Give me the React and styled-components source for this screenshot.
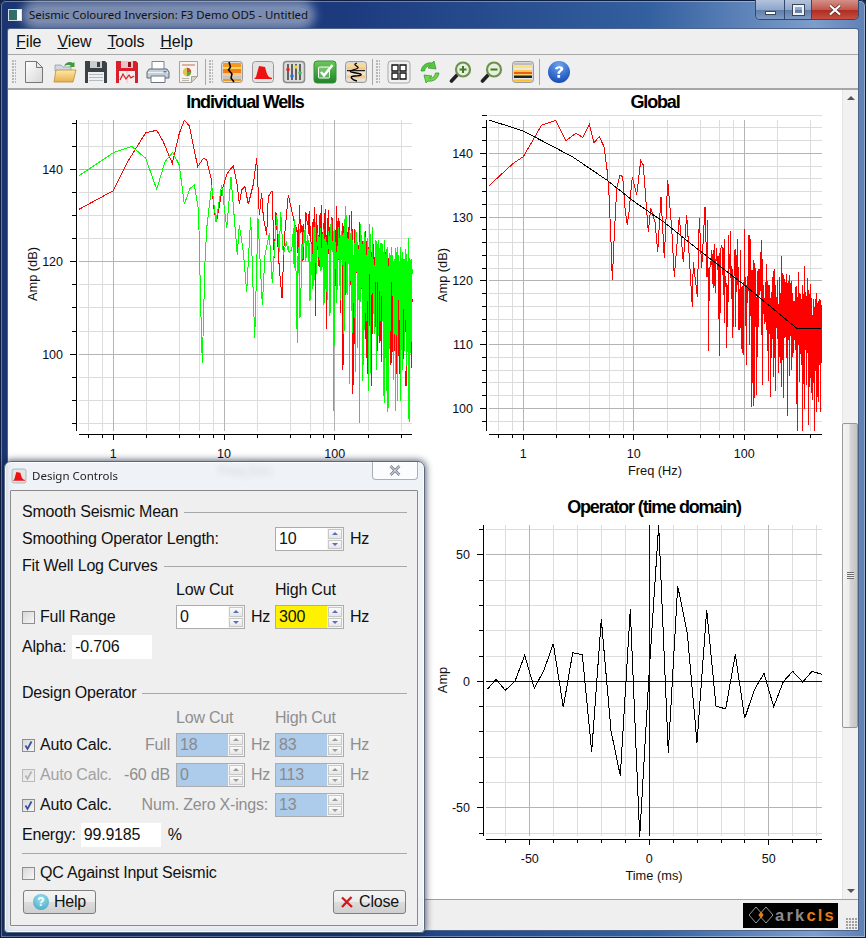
import React from 'react';
import styled, { createGlobalStyle } from 'styled-components';

const GlobalStyle = createGlobalStyle`
  html, body { margin: 0; padding: 0; background: #10244f; }
  * { box-sizing: border-box; }
`;

// ---------- chart helpers ----------

function mulberry(seed) {
  let a = seed;
  return () => {
    a |= 0; a = (a + 0x6d2b79f5) | 0;
    let t = Math.imul(a ^ (a >>> 15), 1 | a);
    t = (t + Math.imul(t ^ (t >>> 7), 61 | t)) ^ t;
    return ((t ^ (t >>> 14)) >>> 0) / 4294967296;
  };
}

function interpLog(knots, f) {
  const lf = Math.log10(f);
  for (let i = 0; i < knots.length - 1; i++) {
    const [f0, v0] = knots[i];
    const [f1, v1] = knots[i + 1];
    if (f <= f1) {
      const t = (lf - Math.log10(f0)) / (Math.log10(f1) - Math.log10(f0));
      return v0 + t * (v1 - v0);
    }
  }
  return knots[knots.length - 1][1];
}

// spectrum noise above f0, in page pixels. deep stretches the downward spikes
function noisySpectrum({ seed, f0, fMax = 500, knots, scale, deep = 1, xAt, yAt, minDb, maxDb }) {
  const rand = mulberry(seed);
  const pts = [];
  for (let f = f0; f <= fMax; f += 0.7) {
    const r = Math.sqrt(-2 * Math.log(Math.max(rand(), 0.0001)));
    const db = Math.max(-26, 20 * Math.log10(Math.max(r, 0.01)));
    const offset = db * scale * (db < 0 ? deep : 1);
    const v = Math.min(maxDb, Math.max(minDb, interpLog(knots, f) + offset));
    pts.push([xAt(f), yAt(v)]);
  }
  return pts;
}

const toStr = (pts) => pts.map(([x, y]) => `${x.toFixed(1)},${y.toFixed(1)}`).join(' ');
const fromZoom = (pts, ox, oy) => pts.map(([x, y]) => [ox + x / 3, oy + y / 3]);

const GRID_MAJOR = '#b4b4b4';
const GRID_MINOR = '#dcdcdc';

function Frame({ left, right, top, bottom, axisX, axisY, xMajor, xMinor, yMajor, yMinor, yTickLabelX, xLabelY, xTickMajor = 6, xTickMinor = 4 }) {
  return (
    <g shapeRendering="crispEdges">
      {yMinor.map((y) => <line key={`ym${y}`} x1={left} x2={right} y1={y} y2={y} stroke={GRID_MINOR} />)}
      {xMinor.map((x) => <line key={`xm${x}`} x1={x} x2={x} y1={top} y2={bottom} stroke={GRID_MINOR} />)}
      {yMajor.map((t) => <line key={`yM${t.y}`} x1={left} x2={right} y1={t.y} y2={t.y} stroke={GRID_MAJOR} />)}
      {xMajor.map((t) => <line key={`xM${t.x}`} x1={t.x} x2={t.x} y1={top} y2={bottom} stroke={GRID_MAJOR} />)}
      <line x1={axisX} x2={axisX} y1={top} y2={bottom} stroke="#000" />
      <line x1={left} x2={right} y1={axisY} y2={axisY} stroke="#000" />
      {yMinor.map((y) => <line key={`ytm${y}`} x1={axisX - 5} x2={axisX} y1={y} y2={y} stroke="#000" />)}
      {yMajor.map((t) => <line key={`ytM${t.y}`} x1={axisX - 7} x2={axisX} y1={t.y} y2={t.y} stroke="#000" />)}
      {xMinor.map((x) => <line key={`xtm${x}`} x1={x} x2={x} y1={axisY} y2={axisY + xTickMinor} stroke="#000" />)}
      {xMajor.map((t) => <line key={`xtM${t.x}`} x1={t.x} x2={t.x} y1={axisY} y2={axisY + xTickMajor} stroke="#000" />)}
      <g shapeRendering="auto">
        {yMajor.map((t) => <TickText key={`yl${t.y}`} x={yTickLabelX} y={t.y + 4.5} textAnchor="end">{t.label}</TickText>)}
        {xMajor.map((t) => <TickText key={`xl${t.x}`} x={t.x} y={xLabelY} textAnchor="middle">{t.label}</TickText>)}
      </g>
    </g>
  );
}

const TickText = styled.text`
  font: 12.5px "Liberation Sans", Arial, sans-serif;
  fill: #0c0c20;
`;

const AxisTitle = styled.text`
  font: 12.8px "Liberation Sans", Arial, sans-serif;
  fill: #111;
`;

const PlotTitle = styled.text`
  font: bold 18px "Liberation Sans", Arial, sans-serif;
  letter-spacing: -1.15px;
  fill: #000;
`;

function logGrid(x1, dec, left, right) {
  const xAt = (f) => x1 + dec * Math.log10(f);
  const minors = [0.6, 0.8, 2, 4, 6, 8, 20, 40, 60, 80, 200, 400].map(xAt).filter((x) => x >= left && x <= right);
  const majors = [1, 10, 100].map((f) => ({ x: xAt(f), label: String(f) }));
  return { xAt, minors, majors };
}

function range(from, to, step) {
  const out = [];
  for (let v = from; v <= to + 1e-6; v += step) out.push(v);
  return out;
}

// ---------- the three plots ----------

function WellsChart() {
  const { xAt, minors, majors } = logGrid(113.3, 110.7, 79, 412);
  const yAt = (v) => 169.3 + (140 - v) * 4.62;
  const yMinor = range(85, 150, 5).filter((v) => v % 20 !== 0).map(yAt);
  const yMajor = [140, 120, 100].map((v) => ({ y: yAt(v), label: String(v) }));

  const redLow = fromZoom([[147,343],[250,287],[290,205],[347,113],[380,106],[400,140],[427,205],[448,115],[463,76],[478,92],[503,215],[520,190],[530,195],[543,250],[553,350],[560,378],[575,290],[590,238],[610,212],[622,270],[628,328],[635,285],[645,275],[655,328],[670,268],[680,190],[688,360],[695,295],[700,365],[710,420],[715,305],[726,287],[733,490],[738,352],[748,520],[756,610],[763,430],[775,300]], 30, 95);
  const greenLow = fromZoom([[147,242],[250,173],[305,154],[347,190],[380,283],[405,200],[428,172],[448,210],[463,328],[480,280],[493,270],[505,340],[507,405],[512,630],[517,805],[525,500],[530,400],[545,270],[558,380],[575,270],[590,400],[603,247],[622,480],[628,390],[640,470],[650,590],[662,365],[674,730],[684,370],[697,630],[705,480],[718,415],[727,565],[740,360],[748,470],[752,350],[760,480]], 30, 95);
  const redHigh = noisySpectrum({ seed: 11, f0: 44, knots: [[40, 127], [100, 124], [160, 120], [400, 110]], scale: 0.85, deep: 1.5, xAt, yAt, minDb: 86, maxDb: 150 });
  const greenHigh = noisySpectrum({ seed: 29, f0: 36, knots: [[36, 119], [100, 122], [160, 120], [400, 114]], scale: 0.95, deep: 1.6, xAt, yAt, minDb: 85, maxDb: 150 });

  return (
    <Plot viewBox="8 90 422 400">
      <PlotTitle x={245} y={108} textAnchor="middle">Individual Wells</PlotTitle>
      <Frame left={79} right={412} top={120} bottom={431} axisX={76.5} axisY={434} xMajor={majors} xMinor={minors} yMajor={yMajor} yMinor={yMinor} yTickLabelX={63} xLabelY={458} />
      <AxisTitle transform="translate(37 274) rotate(-90)" textAnchor="middle">Amp (dB)</AxisTitle>
      <AxisTitle x={245} y={475} textAnchor="middle">Freq (Hz)</AxisTitle>
      <g fill="none" strokeWidth="1" shapeRendering="crispEdges">
        <polyline stroke="#f00" points={toStr([...redLow, ...redHigh])} />
        <polyline stroke="#0f0" points={toStr([...greenLow, ...greenHigh])} />
      </g>
    </Plot>
  );
}

function GlobalChart() {
  const { xAt, minors, majors } = logGrid(523.3, 110.5, 489, 822);
  const yAt = (v) => 153.3 + (140 - v) * 6.375;
  const yMinor = range(98, 146, 2).filter((v) => v % 10 !== 0).map(yAt);
  const yMajor = [140, 130, 120, 110, 100].map((v) => ({ y: yAt(v), label: String(v) }));

  const redLow = fromZoom([[177,272],[250,205],[280,185],[335,90],[377,76],[408,137],[437,115],[458,127],[478,88],[492,143],[508,125],[522,155],[532,230],[537,300],[543,440],[547,555],[553,420],[560,280],[570,240],[578,245],[585,340],[592,390],[597,350],[607,245],[620,300],[632,197],[640,210],[648,320],[655,410],[662,340],[675,380],[683,470],[693,305],[703,490],[713,255],[725,400],[733,545],[748,365],[760,500],[770,360],[787,635],[790,500],[802,605],[808,370],[815,520],[825,335],[831,545]], 430, 95);
  const redHigh = noisySpectrum({ seed: 7, f0: 46, knots: [[46, 121], [100, 119], [270, 113], [500, 110]], scale: 0.9, xAt, yAt, minDb: 96.5, maxDb: 146 });
  const black = fromZoom([[177,75],[280,108],[370,155],[430,187],[530,255],[613,320],[700,380],[800,460],[943,570],[1100,700],[1172,700]], 430, 95);

  return (
    <Plot viewBox="430 90 412 400">
      <PlotTitle x={655} y={108} textAnchor="middle">Global</PlotTitle>
      <Frame left={489} right={822} top={120} bottom={431} axisX={486.5} axisY={434} xMajor={majors} xMinor={minors} yMajor={yMajor} yMinor={yMinor} yTickLabelX={473} xLabelY={458} />
      <AxisTitle transform="translate(447 275) rotate(-90)" textAnchor="middle">Amp (dB)</AxisTitle>
      <AxisTitle x={655} y={475} textAnchor="middle">Freq (Hz)</AxisTitle>
      <g fill="none" strokeWidth="1" shapeRendering="crispEdges">
        <polyline stroke="#f00" points={toStr([...redLow, ...redHigh])} />
        <polyline stroke="#000" points={toStr(black)} />
      </g>
    </Plot>
  );
}

function OperatorChart() {
  const xAt = (t) => 649.3 + t * 2.39;
  const yAt = (v) => 681.3 - v * 2.53;
  const xMinor = [-60, -40, -30, -20, -10, 10, 20, 30, 40, 60, 70].map(xAt);
  const xMajor = [-50, 0, 50].map((t) => ({ x: xAt(t), label: String(t) }));
  const yMinor = [60, 40, 30, 20, 10, -10, -20, -30, -40, -60].map(yAt);
  const yMajor = [50, 0, -50].map((v) => ({ y: yAt(v), label: String(v) }));
  const trace = fromZoom([[172,598],[198,568],[226,601],[255,574],[284,496],[313,595],[342,540],[370,461],[400,652],[428,488],[457,494],[485,785],[514,388],[543,722],[571,857],[601,358],[629,1040],[658,540],[686,105],[715,788],[743,288],[772,430],[801,758],[830,360],[858,648],[887,657],[916,493],[944,685],[973,600],[1002,550],[1031,650],[1060,575],[1088,544],[1118,576],[1146,544],[1175,553]], 430, 490);

  return (
    <Plot viewBox="430 490 412 409">
      <PlotTitle x={654} y={513} textAnchor="middle">Operator (time domain)</PlotTitle>
      <Frame left={486} right={822} top={525} bottom={836} axisX={483.5} axisY={839} xMajor={xMajor} xMinor={xMinor} yMajor={yMajor} yMinor={yMinor} yTickLabelX={470} xLabelY={863} />
      <AxisTitle transform="translate(447 680) rotate(-90)" textAnchor="middle">Amp</AxisTitle>
      <AxisTitle x={654} y={880} textAnchor="middle">Time (ms)</AxisTitle>
      <g fill="none" shapeRendering="crispEdges">
        <line x1={xAt(0)} x2={xAt(0)} y1={525} y2={836} stroke="#000080" />
        <line x1={486} x2={822} y1={yAt(0)} y2={yAt(0)} stroke="#000080" />
        <polyline stroke="#000" points={toStr(trace)} />
      </g>
    </Plot>
  );
}

// ---------- toolbar icons ----------

const Strata = ({ bands }) => (
  <>
    <rect x="1.5" y="1.5" width="21" height="21" rx="3" fill="#d8d8d8" stroke="#9a9a9a" />
    {bands.map(([y, h, c]) => <rect key={y} x="3" y={y} width="18" height={h} fill={c} />)}
  </>
);

const CurveShape = () => (
  <>
    <rect x="1.5" y="1.5" width="21" height="21" rx="3" fill="#e4e4e4" stroke="#9a9a9a" />
    <path d="M3 19l2-2L8 6l6 1 2 7 2 3 3 1v1z" fill="#ee1111" />
  </>
);

const icons = {
  doc: (
    <svg width="24" height="24" viewBox="0 0 24 24">
      <defs><linearGradient id="gDoc" x1="0" y1="0" x2="1" y2="1"><stop offset="0" stopColor="#fff" /><stop offset="1" stopColor="#d6d6d6" /></linearGradient></defs>
      <path d="M3.5 1.5h11l6 6v15h-17z" fill="url(#gDoc)" stroke="#777" />
      <path d="M14.5 1.5v6h6z" fill="#e8e8e8" stroke="#777" />
    </svg>
  ),
  open: (
    <svg width="24" height="24" viewBox="0 0 24 24">
      <defs><linearGradient id="gFold" x1="0" y1="0" x2="0" y2="1"><stop offset="0" stopColor="#fde9a8" /><stop offset="1" stopColor="#e9b04e" /></linearGradient></defs>
      <path d="M2 5h6l2 2h8v4H2z" fill="#cfd8e4" stroke="#8a94a2" strokeWidth=".7" />
      <path d="M1 22 3 10h20l-3 12z" fill="url(#gFold)" stroke="#b98b3a" strokeWidth=".8" />
      <path d="M11 6c2-4 6-5 9-3l1.5-1v5h-5l1.5-1.2c-2-1.2-4.5-.8-7 .2z" fill="#3f9a3a" />
    </svg>
  ),
  save: (
    <svg width="24" height="24" viewBox="0 0 24 24">
      <path d="M1 1h20l2 2v20H1z" fill="#3c4146" />
      <rect x="6" y="1" width="12" height="7" fill="#c9ced3" />
      <rect x="13" y="2" width="3" height="5" fill="#3c4146" />
      <rect x="4" y="12" width="16" height="11" fill="#eef0f2" />
      <path d="M5 14.5h14M5 17.5h14M5 20.5h14" stroke="#b5bac0" />
    </svg>
  ),
  saveRed: (
    <svg width="24" height="24" viewBox="0 0 24 24">
      <path d="M1 1h20l2 2v20H1z" fill="#d9202a" />
      <rect x="6" y="1" width="12" height="7" fill="#e9c3c5" />
      <rect x="13" y="2" width="3" height="5" fill="#8e1218" />
      <rect x="4" y="11" width="16" height="12" fill="#f6eeee" />
      <path d="M4 17h16M12 11v12" stroke="#bbb" strokeWidth=".6" />
      <path d="M5 20l3-6 3 5 3-4 2 3 3-2" fill="none" stroke="#d9202a" strokeWidth="1.2" />
    </svg>
  ),
  print: (
    <svg width="24" height="24" viewBox="0 0 24 24">
      <path d="M6 1.5h12v8H6z" fill="#fff" stroke="#7b8490" />
      <path d="M3 9h18l2 3v6H1v-6z" fill="#c6ced8" stroke="#5f6974" />
      <path d="M2 12.5h20" stroke="#eef2f6" />
      <path d="M5 16h14v6.5H5z" fill="#fff" stroke="#6d7680" />
      <rect x="17.5" y="11" width="3" height="1.5" fill="#3a7fd0" />
    </svg>
  ),
  report: (
    <svg width="24" height="24" viewBox="0 0 24 24">
      <path d="M2.5 1.5h18v15l-6 6h-12z" fill="#f5f3ef" stroke="#a7a39b" />
      <path d="M14.5 22.5v-6h6z" fill="#d8d4cc" stroke="#a7a39b" />
      <path d="M5 4h13v2H5z" fill="#d9b3a0" />
      <circle cx="10" cy="12" r="4.2" fill="#e3c34a" />
      <path d="M10 12V7.8a4.2 4.2 0 0 1 4.2 4.2z" fill="#cf4b3a" />
      <path d="M10 12h4.2a4.2 4.2 0 0 1-4.2 4.2z" fill="#5aa84a" />
      <path d="M5 18.5h7M5 20.5h7" stroke="#b9b5ad" />
    </svg>
  ),
  fault: (
    <svg width="24" height="24" viewBox="0 0 24 24">
      <Strata bands={[[3, 4, '#f39a1e'], [7, 2, '#fcd55a'], [9, 4, '#f57c14'], [13, 3, '#f8c890'], [16, 3, '#c9c4bc'], [19, 2, '#f39a1e']]} />
      <path d="M9 2l1.5 5-2 3 3.5 4-1 4 3 4" fill="none" stroke="#000" strokeWidth="1.5" />
    </svg>
  ),
  curve: (
    <svg width="24" height="24" viewBox="0 0 24 24"><CurveShape /></svg>
  ),
  sliders: (
    <svg width="24" height="24" viewBox="0 0 24 24">
      <rect x="1.5" y="1.5" width="21" height="21" rx="3" fill="#dcdcdc" stroke="#8a8a8a" strokeWidth="1.5" />
      <path d="M6 4v16M10 4v16M14 4v16M18 4v16" stroke="#111" strokeWidth="1.2" />
      <circle cx="6" cy="9.5" r="1.8" fill="#e02a20" />
      <circle cx="10" cy="16" r="1.8" fill="#2a6de0" />
      <circle cx="14" cy="7" r="1.8" fill="#e8dc30" />
      <circle cx="18" cy="13" r="1.8" fill="#3cc040" />
    </svg>
  ),
  check: (
    <svg width="24" height="24" viewBox="0 0 24 24">
      <defs><linearGradient id="gChk" x1="0" y1="0" x2="0" y2="1"><stop offset="0" stopColor="#6cc85a" /><stop offset="1" stopColor="#1c8428" /></linearGradient></defs>
      <rect x="1" y="1" width="22" height="22" rx="3" fill="url(#gChk)" stroke="#3d8d3d" />
      <rect x="5.5" y="7" width="11" height="11" rx="1" fill="rgba(255,255,255,.22)" stroke="#fff" />
      <path d="M8 12l3 3.5L19.5 5" fill="none" stroke="#fff" strokeWidth="2.6" />
    </svg>
  ),
  wiggle: (
    <svg width="24" height="24" viewBox="0 0 24 24">
      <Strata bands={[[3, 4, '#f4d9a0'], [7, 3, '#f8c98a'], [10, 1.5, '#222'], [11.5, 4, '#f1e6cc'], [15.5, 3, '#f8c98a'], [18.5, 2.5, '#e8e2d2']]} />
      <path d="M13 3c-7 2 6 4-1 6s-8 3 0 4 6 3-1 3-3 4 2 5" fill="none" stroke="#000" strokeWidth="1.3" />
    </svg>
  ),
  grid: (
    <svg width="24" height="24" viewBox="0 0 24 24">
      <rect x="1" y="1" width="22" height="22" rx="3" fill="#f0f0f0" stroke="#a8a8a8" />
      <path d="M5 5h6v6H5zM13 5h6v6h-6zM5 13h6v6H5zM13 13h6v6h-6z" fill="#fff" stroke="#111" strokeWidth="1.3" />
    </svg>
  ),
  refresh: (
    <svg width="24" height="24" viewBox="0 0 24 24">
      <path d="M3 11C4 5 9 2 14 3l2-2 2 8-8-1 2.5-2C9 5.5 7 8 6.5 11z" fill="#55c83e" stroke="#2d8f25" strokeWidth=".7" />
      <path d="M21 13c-1 6-6 9-11 8l-2 2-2-8 8 1-2.5 2c3.5.5 5.5-2 6-5z" fill="#6fd64e" stroke="#2d8f25" strokeWidth=".7" />
    </svg>
  ),
  zoomIn: (
    <svg width="24" height="24" viewBox="0 0 24 24">
      <path d="M9 14 2.5 21" stroke="#222" strokeWidth="3.6" strokeLinecap="round" />
      <circle cx="14" cy="9.5" r="7" fill="#e6f0dc" stroke="#6f9150" strokeWidth="2.2" />
      <path d="M10.5 9.5h7M14 6v7" stroke="#3f7a2a" strokeWidth="2" />
    </svg>
  ),
  zoomOut: (
    <svg width="24" height="24" viewBox="0 0 24 24">
      <path d="M9 14 2.5 21" stroke="#222" strokeWidth="3.6" strokeLinecap="round" />
      <circle cx="14" cy="9.5" r="7" fill="#e6f0dc" stroke="#6f9150" strokeWidth="2.2" />
      <path d="M10.5 9.5h7" stroke="#3f7a2a" strokeWidth="2" />
    </svg>
  ),
  layers: (
    <svg width="24" height="24" viewBox="0 0 24 24">
      <Strata bands={[[3, 2, '#bdbdbd'], [5, 3, '#fde27a'], [8, 2, '#e8e8e8'], [10, 2, '#fbc84a'], [12, 2, '#f05a14'], [14, 1.5, '#fdd76a'], [15.5, 2.5, '#222'], [18, 1.5, '#e8e8e8'], [19.5, 2, '#fbbd2e']]} />
    </svg>
  ),
  help: (
    <svg width="24" height="24" viewBox="0 0 24 24">
      <defs><radialGradient id="gHelp" cx=".5" cy=".2" r=".9"><stop offset="0" stopColor="#6da5f0" /><stop offset="1" stopColor="#0b3fb0" /></radialGradient></defs>
      <circle cx="12" cy="12" r="11" fill="url(#gHelp)" />
      <path d="M8 9c0-3 8-4 8.3-.2.1 2.5-3.3 2.8-3.3 5h-2.6c0-3 3-3.3 3-4.7 0-1.3-3-1-3 .4z" fill="#fff" />
      <rect x="10.4" y="15" width="2.7" height="2.7" fill="#fff" />
    </svg>
  ),
};

const toolGroups = [
  ['doc', 'open', 'save', 'saveRed', 'print', 'report'],
  ['fault', 'curve', 'sliders', 'check', 'wiggle'],
  ['grid', 'refresh', 'zoomIn', 'zoomOut', 'layers'],
];

// ---------- app window ----------

const Page = styled.div`
  position: relative;
  width: 866px;
  height: 938px;
  overflow: hidden;
  border-radius: 6px 6px 0 0;
  display: flex;
  flex-direction: column;
  background: linear-gradient(90deg, #1a3672 0%, #1c3b7e 40%, #33609f 75%, #7d9dcc 94%, #5f80b4 100%);
  box-shadow: inset 0 0 0 1px #0f1d3e, inset 0 0 0 2px rgba(255, 255, 255, 0.35);
`;

const TitleBar = styled.div`
  height: 29px;
  flex: none;
  display: flex;
  align-items: flex-start;
  padding-left: 8px;
`;

const AppIcon = styled.div`
  width: 14px;
  height: 12px;
  margin-top: 9px;
  background: linear-gradient(90deg, #2e6f6a 0 65%, #fff 65%);
  border: 1px solid #d8dce2;
`;

const TitleText = styled.div`
  margin: 7px 0 0 7px;
  font: 11.45px "Noto Sans", sans-serif;
  color: #111;
  background: rgba(255, 255, 255, 0.42);
  box-shadow: 0 0 10px 7px rgba(255, 255, 255, 0.42);
  line-height: 16px;
  border-radius: 8px;
  white-space: nowrap;
`;

const WindowControls = styled.div`
  margin-left: auto;
  margin-right: 7px;
  display: flex;
  height: 20px;
  border: 1px solid #33486f;
  border-top: none;
  border-radius: 0 0 5px 5px;
  overflow: hidden;
`;

const WinButton = styled.div`
  width: ${(p) => p.$w}px;
  display: flex;
  align-items: center;
  justify-content: center;
  border-right: 1px solid #33486f;
  background: ${(p) => p.$close
    ? 'linear-gradient(#d49088 0%, #c0584e 50%, #b02a20 52%, #c44f42 100%)'
    : 'linear-gradient(#b3c3dc 0%, #8fa7ca 50%, #5f7ca8 52%, #7f9ac2 100%)'};
  &:last-child { border-right: none; }
`;

const MinGlyph = styled.div`
  width: 11px;
  height: 4px;
  margin-top: 6px;
  background: #fff;
  border: 1px solid #39465c;
`;

const MaxGlyph = styled.div`
  width: 11px;
  height: 10px;
  background: transparent;
  border: 2px solid #eef2f8;
  outline: 1px solid #39465c;
`;

const WindowBody = styled.div`
  flex: 1;
  margin: 0 8px 8px;
  min-height: 0;
  display: flex;
  flex-direction: column;
  background: #efefef;
  box-shadow: 0 0 0 1px #4d6488;
  border-radius: 2px 2px 0 0;
`;

const MenuBar = styled.div`
  height: 25px;
  flex: none;
  display: flex;
  align-items: center;
  padding-left: 8px;
  gap: 16px;
  font: 16px "Liberation Sans", Arial, sans-serif;
  letter-spacing: -0.1px;
  color: #111;
`;

const MenuItem = styled.span`
  &::first-letter { text-decoration: underline; }
`;

const ToolBar = styled.div`
  height: 36px;
  flex: none;
  display: flex;
  align-items: center;
  border-top: 1px solid #a8a8a8;
  border-bottom: 2px solid #a6a6a6;
  padding-left: 4px;
`;

const GripHandle = styled.div`
  width: 4px;
  height: 24px;
  margin-right: ${(p) => p.$mr || 3}px;
  background-image: radial-gradient(circle at 1px 1px, #b8b8b8 1px, transparent 1.2px);
  background-size: 3px 3px;
`;

const ToolSeparator = styled.div`
  width: 1px;
  height: 26px;
  margin: 0 3px 0 1px;
  background: #a8a8a8;
`;

const ToolButton = styled.div`
  width: 31px;
  height: 26px;
  display: flex;
  align-items: center;
  justify-content: center;
`;

const MainRow = styled.div`
  flex: 1;
  min-height: 0;
  display: flex;
`;

const ChartArea = styled.div`
  width: 834px;
  background: #fff;
  display: grid;
  grid-template-columns: 422px 412px;
  grid-template-rows: 400px 409px;
`;

const Plot = styled.svg`
  display: block;
  width: 100%;
  height: 100%;
`;

const Scrollbar = styled.div`
  width: 16px;
  display: flex;
  flex-direction: column;
  background: #f1f1f1;
  border-left: 1px solid #e4e4e4;
`;

const ScrollArrow = styled.div`
  height: 16px;
  flex: none;
  display: flex;
  align-items: center;
  justify-content: center;
  &::after {
    content: "";
    border-left: 4px solid transparent;
    border-right: 4px solid transparent;
    ${(p) => p.$down ? 'border-top: 4px solid #555;' : 'border-bottom: 4px solid #555;'}
  }
`;

const ScrollTrack = styled.div`
  flex: 1;
  display: flex;
  flex-direction: column;
  justify-content: flex-end;
  padding-bottom: 155px;
`;

const ScrollThumb = styled.div`
  height: 305px;
  margin-left: -1px;
  display: flex;
  align-items: center;
  justify-content: center;
  border: 1px solid #979797;
  border-radius: 2px;
  background: linear-gradient(90deg, #f4f4f4 0%, #ececec 45%, #d6d6d6 50%, #c4c4c4 100%);
`;

const ThumbGrip = styled.div`
  width: 7px;
  height: 7px;
  background: repeating-linear-gradient(#6d6d6d 0 1px, #eee 1px 2px);
`;

const StatusBar = styled.div`
  height: 31px;
  flex: none;
  display: flex;
  align-items: center;
  justify-content: flex-end;
  padding-right: 20px;
  border-top: 1px solid #a0a0a0;
  position: relative;
`;

const Logo = styled.div`
  width: 95px;
  height: 25px;
  background: #000;
  display: flex;
  align-items: center;
  padding-left: 6px;
  font: bold 16.5px "Liberation Sans", Arial, sans-serif;
  letter-spacing: 2.2px;
  color: #8c8c8c;
`;

const LogoAccent = styled.span`
  color: #e87a10;
`;

const SizeGrip = styled.div`
  position: absolute;
  right: 1px;
  bottom: 1px;
  width: 11px;
  height: 11px;
  background-image: radial-gradient(circle at 1px 1px, #a0a0a0 1px, transparent 1.2px);
  background-size: 3px 3px;
`;

// ---------- design controls dialog ----------

const Dialog = styled.div`
  position: absolute;
  left: 4px;
  top: 461px;
  width: 421px;
  height: 472px;
  display: flex;
  flex-direction: column;
  border: 1px solid #5a6a7e;
  border-radius: 7px 7px 4px 4px;
  background: rgba(236, 241, 247, 0.86);
  backdrop-filter: blur(3px);
  box-shadow: 0 0 7px 1px rgba(10, 20, 50, 0.65), inset 0 0 0 1px rgba(255, 255, 255, 0.8);
  padding: 0 6px 6px 5px;
  overflow: hidden;
`;

const DialogTitleBar = styled.div`
  height: 28px;
  flex: none;
  display: flex;
  align-items: flex-start;
`;

const DialogIcon = styled.div`
  margin: 6px 0 0 1px;
  width: 16px;
  height: 16px;
`;

const DialogTitle = styled.div`
  margin: 6px 0 0 5px;
  font: 11.5px "Noto Sans", sans-serif;
  line-height: 16px;
  color: #222;
`;

const DialogClose = styled.div`
  margin-left: auto;
  margin-top: -1px;
  width: 46px;
  height: 19px;
  display: flex;
  align-items: center;
  justify-content: center;
  background: rgba(255, 255, 255, 0.75);
  border: 1px solid #a9afb8;
  border-top: none;
  border-radius: 0 0 4px 4px;
`;

const DialogPanel = styled.div`
  flex: 1;
  display: flex;
  flex-direction: column;
  padding: 9px 10px 0 11px;
  background: #efefef;
  border: 1px solid #8a8a8a;
  border-radius: 1px;
  font: 16px "Liberation Sans", Arial, sans-serif;
  letter-spacing: -0.2px;
  color: #111;
`;

const SectionRow = styled.div`
  height: 24px;
  display: flex;
  align-items: center;
  gap: 6px;
  white-space: nowrap;
  &::after {
    content: "";
    flex: 1;
    height: 1px;
    background: #a8a8a8;
  }
`;

const Row = styled.div`
  height: ${(p) => p.$h || 30}px;
  display: grid;
  grid-template-columns: 154px 69px 30px 69px auto;
  align-items: center;
  white-space: nowrap;
  color: ${(p) => (p.$dim ? '#8e8e8e' : 'inherit')};
`;

const LeadCell = styled.div`
  grid-column: ${(p) => (p.$wide ? '1 / 4' : 'auto')};
  display: flex;
  align-items: center;
  justify-content: space-between;
  padding-right: ${(p) => (p.$wide ? 7 : 6)}px;
`;

const FieldCaption = styled.span`
  color: #8e8e8e;
`;

const WideText = styled.span`
  grid-column: 1 / 4;
`;

const WholeRowCell = styled.div`
  grid-column: 1 / 6;
`;

const HzLabel = styled.span`
  padding-left: 6px;
  color: ${(p) => (p.$dim ? '#8e8e8e' : 'inherit')};
`;

const Spin = styled.div`
  grid-column: ${(p) => p.$col || 'auto'};
  width: 69px;
  height: 24px;
  display: flex;
  align-items: stretch;
  border: 1px solid #acacac;
  background: ${(p) => (p.$bg ? p.$bg : '#fff')};
  color: ${(p) => (p.$dim ? '#8a8a8a' : '#111')};
  padding-left: 3px;
  line-height: 22px;
`;

const SpinValue = styled.span`
  flex: 1;
`;

const SpinArrows = styled.div`
  width: 16px;
  flex: none;
  display: flex;
  flex-direction: column;
  background: #f4f4f4;
  padding: 1px;
  gap: 1px;
`;

const SpinArrow = styled.div`
  flex: 1;
  display: flex;
  align-items: center;
  justify-content: center;
  border: 1px solid #c8c8c8;
  background: linear-gradient(#fbfbfb, #e6e6e6);
  &::after {
    content: "";
    border-left: 3px solid transparent;
    border-right: 3px solid transparent;
    ${(p) => {
      const c = p.$dim ? '#9a9a9a' : '#5a6fb5';
      return p.$down ? `border-top: 3px solid ${c};` : `border-bottom: 3px solid ${c};`;
    }}
  }
`;

const CheckWrap = styled.label`
  display: flex;
  align-items: center;
  gap: 5px;
  color: ${(p) => (p.$dim ? '#a2a2a2' : 'inherit')};
`;

const CheckBox = styled.span`
  width: 13px;
  height: 13px;
  display: flex;
  align-items: center;
  justify-content: center;
  border: 1px solid #8e8e8e;
  background: linear-gradient(135deg, #d8d8d8, #f6f6f6);
  opacity: ${(p) => (p.$dim ? 0.55 : 1)};
`;

const ValueRow = styled.div`
  height: 30px;
  display: flex;
  align-items: center;
  gap: ${(p) => p.$gap}px;
`;

const ValueField = styled.div`
  width: 80px;
  height: 24px;
  background: #fff;
  padding-left: 3px;
  line-height: 24px;
`;

const PercentSign = styled.span`
  margin-left: 2px;
`;

const Divider = styled.div`
  height: 1px;
  margin: 3px 0 7px;
  background: #a8a8a8;
  flex: none;
`;

const Spacer = styled.div`
  height: ${(p) => p.$h}px;
  flex: none;
`;

const Footer = styled.div`
  margin-top: 5px;
  padding: 0 1px;
  display: flex;
  justify-content: space-between;
`;

const DialogButton = styled.div`
  width: 73px;
  height: 24px;
  display: flex;
  align-items: center;
  justify-content: center;
  gap: 5px;
  border: 1px solid #7f7f7f;
  border-radius: 3px;
  background: linear-gradient(#f4f4f4 0%, #ececec 48%, #dcdcdc 52%, #cfcfcf 100%);
`;

const HelpDot = styled.span`
  width: 16px;
  height: 16px;
  border-radius: 50%;
  flex: none;
  display: flex;
  align-items: center;
  justify-content: center;
  background: radial-gradient(circle at 50% 30%, #9fe0ea, #3ba3c2);
  color: #fff;
  font: bold 12px "Liberation Sans", Arial, sans-serif;
`;

const SpinBox = ({ value, dim, bg, col }) => (
  <Spin $dim={dim} $bg={bg} $col={col}>
    <SpinValue>{value}</SpinValue>
    <SpinArrows>
      <SpinArrow $dim={dim} />
      <SpinArrow $dim={dim} $down />
    </SpinArrows>
  </Spin>
);

const Check = ({ checked, dim, children }) => (
  <CheckWrap $dim={dim}>
    <CheckBox $dim={dim}>
      {checked && (
        <svg width="11" height="11" viewBox="0 0 11 11">
          <path d="M2.5 5.5 4.5 9 8.5 1.5" fill="none" stroke={dim ? '#888' : '#3b4f9c'} strokeWidth="1.8" />
        </svg>
      )}
    </CheckBox>
    {children}
  </CheckWrap>
);

function DesignControls() {
  return (
    <Dialog>
      <DialogTitleBar>
        <DialogIcon>
          <svg width="16" height="16" viewBox="0 0 24 24"><CurveShape /></svg>
        </DialogIcon>
        <DialogTitle>Design Controls</DialogTitle>
        <DialogClose>
          <svg width="12" height="11" viewBox="0 0 12 11">
            <path d="M1.5 1 10.5 10M10.5 1 1.5 10" stroke="#77808c" strokeWidth="2.6" />
            <path d="M1.5 1 10.5 10M10.5 1 1.5 10" stroke="#f2f4f6" strokeWidth="1" />
          </svg>
        </DialogClose>
      </DialogTitleBar>
      <DialogPanel>
        <SectionRow>Smooth Seismic Mean</SectionRow>
        <Row>
          <WideText>Smoothing Operator Length:</WideText>
          <SpinBox value="10" col="4" />
          <HzLabel>Hz</HzLabel>
        </Row>
        <SectionRow>Fit Well Log Curves</SectionRow>
        <Row $h={24}>
          <span />
          <span>Low Cut</span>
          <span />
          <span>High Cut</span>
        </Row>
        <Row>
          <Check>Full Range</Check>
          <SpinBox value="0" />
          <HzLabel>Hz</HzLabel>
          <SpinBox value="300" bg="#fff200" />
          <HzLabel>Hz</HzLabel>
        </Row>
        <ValueRow $gap={6}>
          Alpha:
          <ValueField>-0.706</ValueField>
        </ValueRow>
        <Spacer $h={19} />
        <SectionRow>Design Operator</SectionRow>
        <Row $h={25} $dim>
          <span />
          <span>Low Cut</span>
          <span />
          <span>High Cut</span>
        </Row>
        <Row>
          <LeadCell>
            <Check checked>Auto Calc.</Check>
            <FieldCaption>Full</FieldCaption>
          </LeadCell>
          <SpinBox value="18" dim bg="#adcbeb" />
          <HzLabel $dim>Hz</HzLabel>
          <SpinBox value="83" dim bg="#adcbeb" />
          <HzLabel $dim>Hz</HzLabel>
        </Row>
        <Row>
          <LeadCell>
            <Check checked dim>Auto Calc.</Check>
            <FieldCaption>-60 dB</FieldCaption>
          </LeadCell>
          <SpinBox value="0" dim bg="#adcbeb" />
          <HzLabel $dim>Hz</HzLabel>
          <SpinBox value="113" dim bg="#adcbeb" />
          <HzLabel $dim>Hz</HzLabel>
        </Row>
        <Row>
          <LeadCell $wide>
            <Check checked>Auto Calc.</Check>
            <FieldCaption>Num. Zero X-ings:</FieldCaption>
          </LeadCell>
          <SpinBox value="13" dim bg="#adcbeb" />
        </Row>
        <ValueRow $gap={5}>
          Energy:
          <ValueField>99.9185</ValueField>
          <PercentSign>%</PercentSign>
        </ValueRow>
        <Divider />
        <Row $h={24}>
          <WholeRowCell><Check>QC Against Input Seismic</Check></WholeRowCell>
        </Row>
        <Footer>
          <DialogButton><HelpDot>?</HelpDot>Help</DialogButton>
          <DialogButton>
            <svg width="14" height="14" viewBox="0 0 14 14">
              <path d="M2 2.5 12 12M11.5 2 2 12" stroke="#cf1b1b" strokeWidth="2.4" />
            </svg>
            Close
          </DialogButton>
        </Footer>
      </DialogPanel>
    </Dialog>
  );
}

export default function App() {
  return (
    <Page>
      <GlobalStyle />
      <TitleBar>
        <AppIcon />
        <TitleText>Seismic Coloured Inversion: F3 Demo OD5 - Untitled</TitleText>
        <WindowControls>
          <WinButton $w={29}><MinGlyph /></WinButton>
          <WinButton $w={27}><MaxGlyph /></WinButton>
          <WinButton $w={46} $close>
            <svg width="14" height="12" viewBox="0 0 14 12">
              <path d="M2 1.5 12 10.5M12 1.5 2 10.5" stroke="#5a2a28" strokeWidth="3.6" />
              <path d="M2 1.5 12 10.5M12 1.5 2 10.5" stroke="#fff" strokeWidth="2.2" />
            </svg>
          </WinButton>
        </WindowControls>
      </TitleBar>
      <WindowBody>
        <MenuBar>
          <MenuItem>File</MenuItem>
          <MenuItem>View</MenuItem>
          <MenuItem>Tools</MenuItem>
          <MenuItem>Help</MenuItem>
        </MenuBar>
        <ToolBar>
          {toolGroups.map((group, i) => (
            <React.Fragment key={group[0]}>
              {i > 0 && <ToolSeparator />}
              <GripHandle $mr={i === 0 ? 2 : 3} />
              {group.map((name) => <ToolButton key={name}>{icons[name]}</ToolButton>)}
            </React.Fragment>
          ))}
          <ToolSeparator />
          <ToolButton>{icons.help}</ToolButton>
        </ToolBar>
        <MainRow>
          <ChartArea>
            <WellsChart />
            <GlobalChart />
            <span />
            <OperatorChart />
          </ChartArea>
          <Scrollbar>
            <ScrollArrow />
            <ScrollTrack>
              <ScrollThumb><ThumbGrip /></ScrollThumb>
            </ScrollTrack>
            <ScrollArrow $down />
          </Scrollbar>
        </MainRow>
        <StatusBar>
          <Logo>
            <svg width="26" height="20" viewBox="0 0 26 20">
              <path d="M7 2 14 10 7 18 0 10zM17 2 24 10 17 18 10 10z" fill="none" stroke="#9a9a9a" />
              <path d="M12 6.5 14.5 10 12 13.5 9.5 10z" fill="#e87a10" />
            </svg>
            ark<LogoAccent>cls</LogoAccent>
          </Logo>
          <SizeGrip />
        </StatusBar>
      </WindowBody>
      <DesignControls />
    </Page>
  );
}
